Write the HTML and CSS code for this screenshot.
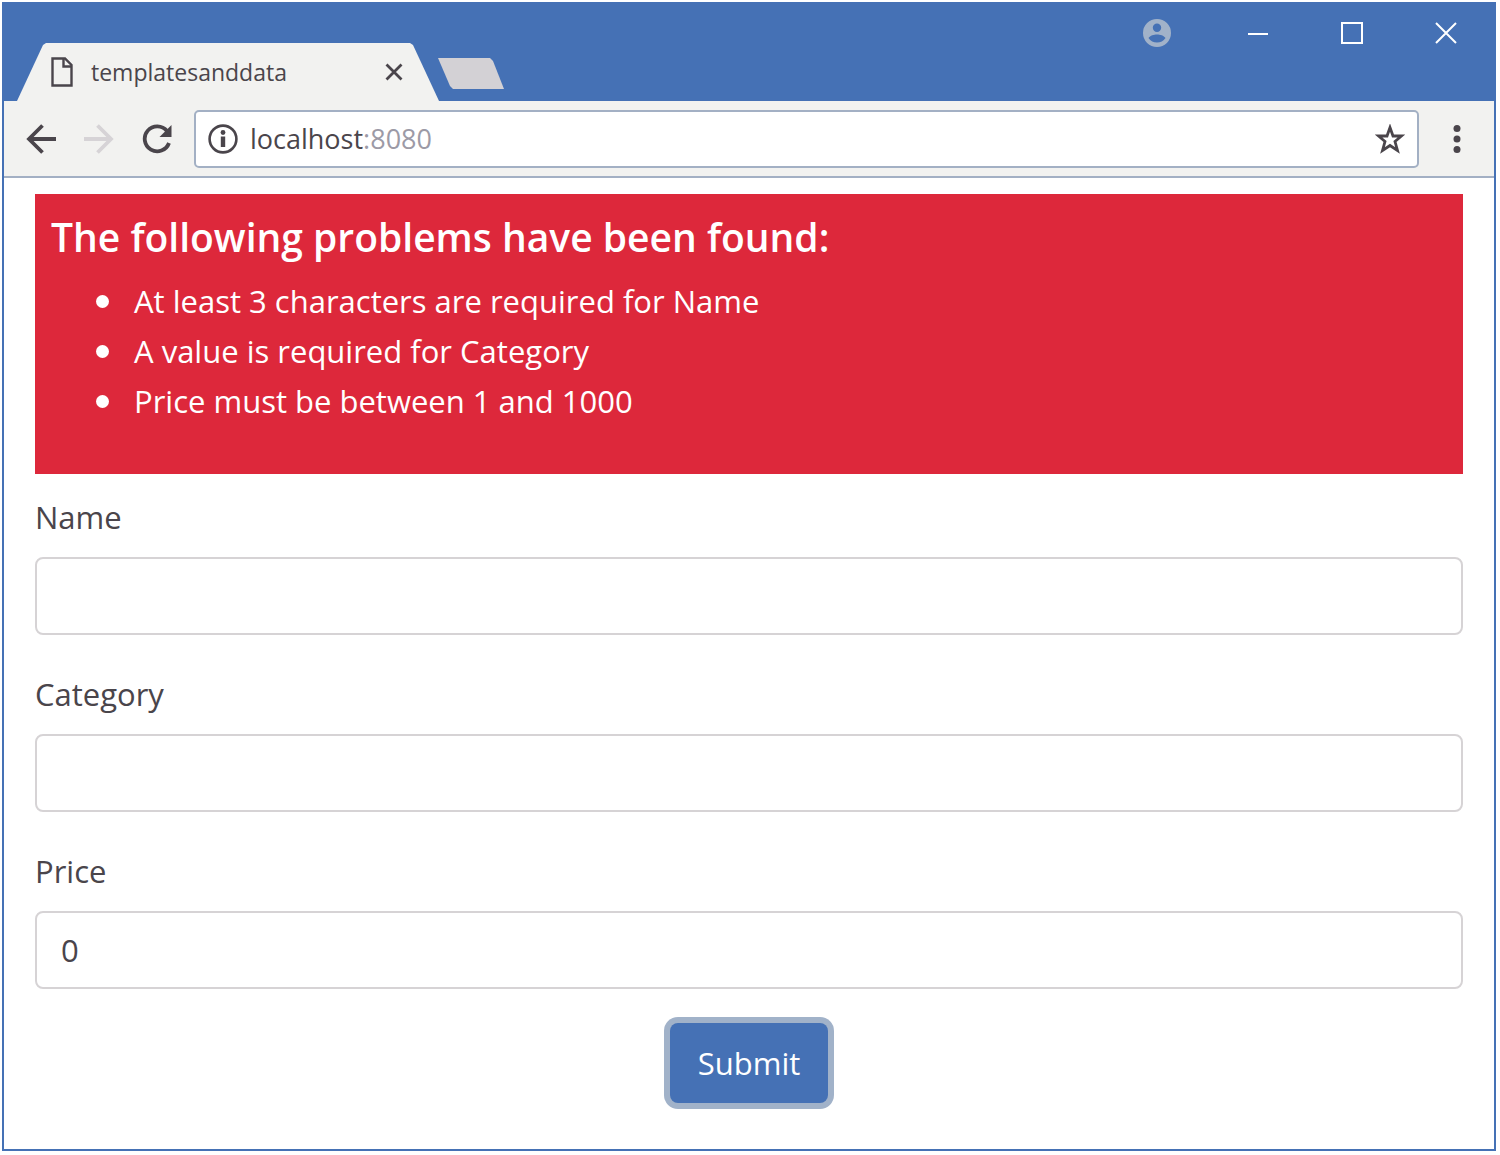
FILE: index.html
```html
<!DOCTYPE html>
<html lang="en">
<head>
<meta charset="utf-8">
<meta name="viewport" content="width=device-width, initial-scale=1">
<title>templatesanddata</title>
<link rel="stylesheet" href="styles.css">
</head>
<body>
<div class="window">
  <header class="titlebar">
    <div class="tab">
      <svg class="tab-icon" width="22" height="30" viewBox="0 0 22 30" fill="none" stroke="currentColor" stroke-width="2.400"><path d="M1.500 1.500H14L20.500 8V28.500H1.500Z"/><path d="M12.500 2V9.500H20"/></svg>
      <span class="tab-title">templatesanddata</span>
      <button class="icon-button" type="button" aria-label="Close tab"><svg width="18" height="18" viewBox="0 0 18 18" stroke="currentColor" stroke-width="2.800"><path d="M1.500 1.500l15 15M16.500 1.500l-15 15"/></svg></button>
    </div>
    <button class="new-tab" type="button" aria-label="New tab"></button>
    <div class="window-controls">
      <button class="icon-button profile" type="button" aria-label="Profile"><svg width="28" height="28" viewBox="0 0 28 28"><path fill="currentColor" fill-rule="evenodd" d="M14 0a14 14 0 1 0 0 28a14 14 0 1 0 0-28ZM14 4.500a4.200 4.200 0 1 1 0 8.400a4.200 4.200 0 1 1 0-8.400ZM5.500 19C7 16.500 11 15.500 14 15.500S21 16.500 22.500 19C20.500 22 17.500 23.500 14 23.500S7.500 22 5.500 19Z"/></svg></button>
      <button class="icon-button" type="button" aria-label="Minimize"><svg width="22" height="22" viewBox="0 0 22 22" stroke="currentColor" stroke-width="2"><path d="M1 12h20"/></svg></button>
      <button class="icon-button" type="button" aria-label="Maximize"><svg width="22" height="22" viewBox="0 0 22 22" fill="none" stroke="currentColor" stroke-width="2"><path d="M1 1h20v20H1z"/></svg></button>
      <button class="icon-button" type="button" aria-label="Close window"><svg width="22" height="22" viewBox="0 0 22 22" stroke="currentColor" stroke-width="2"><path d="M1 1l20 20M21 1L1 21"/></svg></button>
    </div>
  </header>
  <nav class="toolbar">
    <button class="icon-button" type="button" aria-label="Back"><svg width="30" height="30" viewBox="0 0 30 30" fill="none" stroke="currentColor" stroke-width="3.800"><path d="M16.500 1.500L3 15l13.500 13.500M3 15h27"/></svg></button>
    <button class="icon-button" type="button" aria-label="Forward" disabled><svg width="30" height="30" viewBox="0 0 30 30" fill="none" stroke="currentColor" stroke-width="3.800"><path d="M13.500 1.500L27 15 13.500 28.500M27 15H0"/></svg></button>
    <button class="icon-button" type="button" aria-label="Reload"><svg width="30" height="30" viewBox="0 0 30 30"><path d="M25 7A12.500 12.500 0 1 0 27 19" fill="none" stroke="currentColor" stroke-width="3.800"/><path d="M29.500 1V13H17.500Z" fill="currentColor"/></svg></button>
    <div class="address">
      <svg width="30" height="30" viewBox="0 0 30 30"><circle cx="15" cy="15" r="13.400" fill="none" stroke="currentColor" stroke-width="2.600"/><circle cx="15" cy="8.500" r="2.400" fill="currentColor"/><path d="M12.800 12.500h4.400V23h-4.400z" fill="currentColor"/></svg>
      <span class="url">localhost<span class="port">:8080</span></span>
      <button class="icon-button" type="button" aria-label="Bookmark"><svg width="30" height="30" viewBox="0 0 30 30" fill="none" stroke="currentColor" stroke-width="2.800"><path d="M15 3.500L18 12H26.500L20 17.500L22.500 26.500L15 21.500L7.500 26.500L10 17.500L3.500 12H12Z"/></svg></button>
    </div>
    <button class="icon-button" type="button" aria-label="Menu"><svg width="8" height="30" viewBox="0 0 8 30" fill="currentColor"><circle cx="4" cy="4.500" r="3.500"/><circle cx="4" cy="15" r="3.500"/><circle cx="4" cy="25.500" r="3.500"/></svg></button>
  </nav>
  <main class="page">
    <section class="alert" role="alert">
      <h1 class="alert-title">The following problems have been found:</h1>
      <ul class="alert-list">
        <li>At least 3 characters are required for Name</li>
        <li>A value is required for Category</li>
        <li>Price must be between 1 and 1000</li>
      </ul>
    </section>
    <form class="form">
      <div class="field">
        <label for="name">Name</label>
        <input id="name" type="text">
      </div>
      <div class="field">
        <label for="category">Category</label>
        <input id="category" type="text">
      </div>
      <div class="field">
        <label for="price">Price</label>
        <input id="price" type="text" inputmode="numeric" value="0">
      </div>
      <button class="submit" type="button">Submit</button>
    </form>
  </main>
</div>
</body>
</html>
```
FILE: styles.css
```css
* {
  box-sizing: border-box;
}

body {
  margin: 0;
  min-height: 100vh;
  padding: 2px 4px 4px 2px;
  display: flex;
  background: #fff;
  color: #4a454b;
  font: 31px/50px "Open Sans", "Noto Sans", sans-serif;
}

svg {
  display: block;
  flex: none;
}

button,
input {
  font: inherit;
  color: inherit;
}

.window {
  flex: 1;
  min-width: 0;
  display: flex;
  flex-direction: column;
  border: 2px solid #4571b5;
  border-top: 0;
}

.icon-button {
  flex: none;
  padding: 0;
  border: 0;
  background: none;
}

.icon-button:disabled {
  color: #d6d3d6;
}

.titlebar {
  display: flex;
  height: 99px;
  padding-left: 13px;
  background: #4571b5;
}

.tab {
  flex: 0 1 422px;
  align-self: flex-end;
  display: flex;
  align-items: center;
  gap: 18px;
  height: 58px;
  padding: 0 36px 0 34px;
  background: #f2f2f0;
  clip-path: polygon(0 100%, 26px 2px, 29px 0, calc(100% - 29px) 0, calc(100% - 26px) 2px, 100% 100%);
}

.tab-title {
  flex: 1;
  min-width: 0;
  overflow: hidden;
  white-space: nowrap;
  font-size: 23px;
}

.new-tab {
  width: 66px;
  height: 31px;
  margin: 56px 0 0 -1px;
  padding: 0;
  border: 0;
  background: #d3d1d5;
  clip-path: polygon(0 0, 52px 0, 55px 3px, 100% 100%, 15px 100%, 12px 28px);
}

.window-controls {
  display: flex;
  align-items: center;
  gap: 72px;
  height: 62px;
  margin-left: auto;
  padding-right: 37px;
  color: #fff;
}

.profile {
  margin-right: 4px;
  color: #a1b2c9;
}

.toolbar {
  display: flex;
  align-items: center;
  gap: 28px;
  height: 77px;
  padding: 0 33px 0 22px;
  background: #f2f2f0;
  border-bottom: 2px solid #a3b0c4;
}

.address {
  flex: 1;
  min-width: 0;
  display: flex;
  align-items: center;
  gap: 12px;
  height: 58px;
  margin: 0 6px 0 -6px;
  padding: 0 12px;
  background: #fff;
  border: 2px solid #a3b0c4;
  border-radius: 5px;
  font-size: 27px;
}

.url {
  flex: 1;
}

.port {
  color: #9c9aa6;
}

.page {
  flex: 1;
  padding: 16px 31px 40px;
}

.alert {
  padding: 16px 16px 48px;
  background: #dd283b;
  color: #fff;
}

.alert-title {
  margin: 0 0 12px;
  font-size: 39px;
  line-height: 54px;
  font-weight: 600;
}

.alert-list {
  margin: 0;
  padding-left: 45px;
  list-style: none;
}

.alert-list li {
  display: flex;
  align-items: center;
  gap: 25px;
}

.alert-list li::before {
  content: "";
  flex: none;
  width: 13px;
  height: 13px;
  border-radius: 50%;
  background: #fff;
}

.form {
  display: flex;
  flex-direction: column;
  gap: 34px;
  padding-top: 18px;
}

.field {
  display: flex;
  flex-direction: column;
  gap: 15px;
}

.field input {
  width: 100%;
  height: 78px;
  padding: 0 24px;
  border: 2px solid #d6d3d5;
  border-radius: 8px;
  background: #fff;
}

.submit {
  align-self: center;
  height: 80px;
  padding: 0 28px;
  border: 0;
  border-radius: 8px;
  background: #4571b5;
  box-shadow: 0 0 0 6px #a1b2c9;
  color: #fff;
}
```
